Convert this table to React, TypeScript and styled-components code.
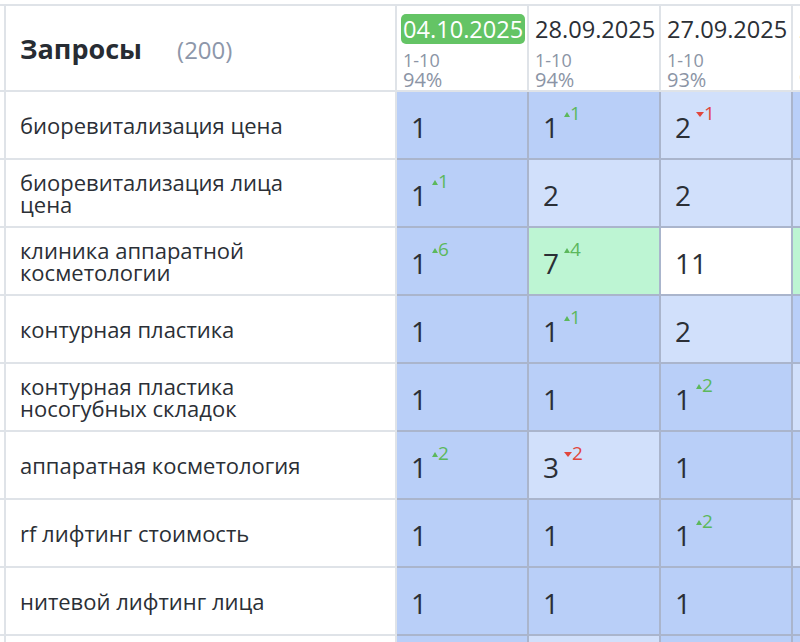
import React from 'react';
import styled, { createGlobalStyle } from 'styled-components';

const Global = createGlobalStyle`
  html, body { margin: 0; padding: 0; background: #ffffff; }
  body { font-family: "Open Sans", "Noto Sans", sans-serif; color: #2b2f36; overflow: hidden; }
  * { box-sizing: border-box; }
`;

type Tone = 'dark' | 'light' | 'green' | 'white';

const toneBg: Record<Tone, string> = {
  dark: '#b9cff8',
  light: '#d1e0fb',
  green: '#bdf5d3',
  white: '#ffffff',
};

const Page = styled.div`
  width: 800px;
  height: 642px;
  overflow: hidden;
  padding-top: 4px;
`;

const Table = styled.div`
  display: grid;
  grid-template-columns: 6px 391px 132px 132px 132px 132px;
  grid-template-rows: 86px repeat(9, 68px);
  border-top: 2px solid #dfe3e8;
  width: max-content;
`;

const StubCell = styled.div`
  border-right: 2px solid #dfe3e8;
  border-bottom: 2px solid #dfe3e8;
`;

const TitleCell = styled.div`
  display: flex;
  align-items: baseline;
  align-content: center;
  flex-wrap: wrap;
  padding-left: 14px;
  border-right: 2px solid #dfe3e8;
  border-bottom: 2px solid #dfe3e8;
`;

const Title = styled.span`
  font-size: 27px;
  font-weight: 700;
  color: #272c33;
`;

const Count = styled.span`
  font-size: 24px;
  color: #8d97aa;
  margin-left: 35px;
`;

const DateHead = styled.div`
  padding: 8px 0 0 4px;
  border-right: 2px solid #dfe3e8;
  border-bottom: 2px solid #dfe3e8;
  overflow: hidden;
  white-space: nowrap;
`;

const DateLabel = styled.div<{ $current?: boolean }>`
  display: inline-block;
  font-size: 23.6px;
  line-height: 30px;
  padding: 0 2px;
  border-radius: 5px;
  background: ${(p) => (p.$current ? '#64c465' : 'transparent')};
  color: ${(p) => (p.$current ? '#ffffff' : '#2b2f36')};
`;

const Stats = styled.div`
  margin-top: 6px;
  padding-left: 2px;
  color: #8b94a5;
`;

const Range = styled.div`
  font-size: 18px;
  line-height: 20px;
`;

const Percent = styled.div`
  font-size: 20px;
  line-height: 19px;
`;

const QueryCell = styled.div`
  display: flex;
  align-items: center;
  padding-left: 14px;
  border-right: 2px solid #dfe3e8;
  border-bottom: 2px solid #dfe3e8;
`;

const QueryText = styled.div`
  font-size: 22px;
  line-height: 22px;
  max-width: 315px;
  color: #2b2f36;
`;

const DataCell = styled.div<{ $tone: Tone }>`
  display: flex;
  align-items: center;
  padding: 3px 0 0 14px;
  background: ${(p) => toneBg[p.$tone]};
  border-right: 2px solid #aab5cc;
  border-bottom: 2px solid #aab5cc;
`;

const Position = styled.div`
  display: flex;
  align-items: flex-start;
`;

const Value = styled.span`
  font-size: 28px;
  line-height: 28px;
  color: #2b2f36;
`;

const Delta = styled.span<{ $up: boolean }>`
  display: flex;
  align-items: center;
  margin: -9px 0 0 5px;
  font-size: 19px;
  line-height: 19px;
  color: ${(p) => (p.$up ? '#5cb85c' : '#e0463d')};
`;

const UpArrow = styled.span`
  width: 0;
  height: 0;
  border-left: 3px solid transparent;
  border-right: 3px solid transparent;
  border-bottom: 5px solid #5cb85c;
  margin-top: 3px;
`;

const DownArrow = styled.span`
  width: 0;
  height: 0;
  border-left: 4.5px solid transparent;
  border-right: 4.5px solid transparent;
  border-top: 5px solid #e0463d;
  margin-top: 2px;
`;

type Cell = { v: number; t: Tone; d?: number };

const dates = [
  { date: '04.10.2025', range: '1-10', pct: '94%', current: true },
  { date: '28.09.2025', range: '1-10', pct: '94%' },
  { date: '27.09.2025', range: '1-10', pct: '93%' },
  { date: '26.09.2025', range: '1-10', pct: '93%' },
];

const rows: { q: string; cells: Cell[] }[] = [
  { q: 'биоревитализация цена', cells: [{ v: 1, t: 'dark' }, { v: 1, t: 'dark', d: 1 }, { v: 2, t: 'light', d: -1 }, { v: 1, t: 'dark' }] },
  { q: 'биоревитализация лица цена', cells: [{ v: 1, t: 'dark', d: 1 }, { v: 2, t: 'light' }, { v: 2, t: 'light' }, { v: 2, t: 'light' }] },
  { q: 'клиника аппаратной косметологии', cells: [{ v: 1, t: 'dark', d: 6 }, { v: 7, t: 'green', d: 4 }, { v: 11, t: 'white' }, { v: 5, t: 'green' }] },
  { q: 'контурная пластика', cells: [{ v: 1, t: 'dark' }, { v: 1, t: 'dark', d: 1 }, { v: 2, t: 'light' }, { v: 1, t: 'dark' }] },
  { q: 'контурная пластика носогубных складок', cells: [{ v: 1, t: 'dark' }, { v: 1, t: 'dark' }, { v: 1, t: 'dark', d: 2 }, { v: 3, t: 'light' }] },
  { q: 'аппаратная косметология', cells: [{ v: 1, t: 'dark', d: 2 }, { v: 3, t: 'light', d: -2 }, { v: 1, t: 'dark' }, { v: 1, t: 'dark' }] },
  { q: 'rf лифтинг стоимость', cells: [{ v: 1, t: 'dark' }, { v: 1, t: 'dark' }, { v: 1, t: 'dark', d: 2 }, { v: 3, t: 'light' }] },
  { q: 'нитевой лифтинг лица', cells: [{ v: 1, t: 'dark' }, { v: 1, t: 'dark' }, { v: 1, t: 'dark' }, { v: 1, t: 'dark' }] },
  { q: 'мезотерапия лица цена', cells: [{ v: 1, t: 'dark' }, { v: 2, t: 'light' }, { v: 1, t: 'dark' }, { v: 1, t: 'dark' }] },
];

export default function App() {
  return (
    <Page>
      <Global />
      <Table>
        <StubCell />
        <TitleCell>
          <Title>Запросы</Title>
          <Count>(200)</Count>
        </TitleCell>
        {dates.map((d) => (
          <DateHead key={d.date}>
            <DateLabel $current={d.current}>{d.date}</DateLabel>
            <Stats>
              <Range>{d.range}</Range>
              <Percent>{d.pct}</Percent>
            </Stats>
          </DateHead>
        ))}
        {rows.map((r) => (
          <React.Fragment key={r.q}>
            <StubCell />
            <QueryCell>
              <QueryText>{r.q}</QueryText>
            </QueryCell>
            {r.cells.map((c, i) => (
              <DataCell key={i} $tone={c.t}>
                <Position>
                  <Value>{c.v}</Value>
                  {c.d ? (
                    <Delta $up={c.d > 0}>
                      {c.d > 0 ? <UpArrow /> : <DownArrow />}
                      {Math.abs(c.d)}
                    </Delta>
                  ) : null}
                </Position>
              </DataCell>
            ))}
          </React.Fragment>
        ))}
      </Table>
    </Page>
  );
}
